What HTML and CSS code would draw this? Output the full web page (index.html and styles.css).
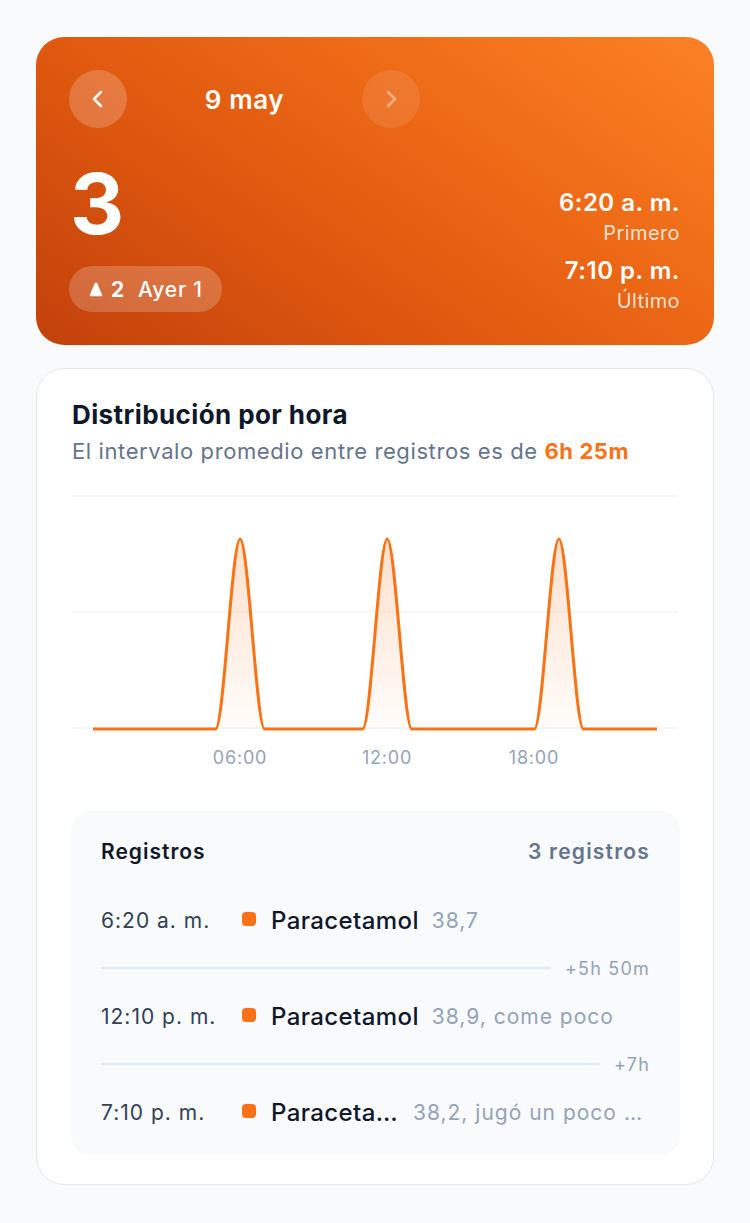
FILE: index.html
```html
<!DOCTYPE html>
<html lang="es">
<head>
    <meta charset="UTF-8">
    <meta name="viewport" content="width=device-width, initial-scale=1.0">
    <title>Distribución por hora</title>
    <link rel="stylesheet" href="styles.css">
</head>
<body>
    <div class="page">
        <!-- Day summary -->
        <section class="hero">
            <div class="day-nav">
                <button class="nav-btn">
                    <svg width="16" height="20" viewBox="0 0 16 20"><path d="M11 3 L4 10 L11 17" fill="none" stroke="#fff" stroke-width="2.6" stroke-linecap="round" stroke-linejoin="round"/></svg>
                </button>
                <div class="day-label">9 may</div>
                <button class="nav-btn disabled">
                    <svg width="16" height="20" viewBox="0 0 16 20"><path d="M5 3 L12 10 L5 17" fill="none" stroke="#fff" stroke-width="2.6" stroke-linecap="round" stroke-linejoin="round"/></svg>
                </button>
            </div>
            <div class="hero-body">
                <div class="hero-left">
                    <div class="count">3</div>
                    <div class="compare">
                        <svg width="14" height="15" viewBox="0 0 14 15"><path d="M5.6 1.6 Q7 -0.4 8.4 1.6 L13.2 13 Q13.6 14.2 12.3 14.2 L1.7 14.2 Q0.4 14.2 0.8 13 Z" fill="#fff"/></svg>
                        <span class="compare-diff">2</span>
                        <span class="compare-prev">Ayer 1</span>
                    </div>
                </div>
                <div class="hero-right">
                    <div class="stat">
                        <div class="stat-time">6:20 a. m.</div>
                        <div class="stat-label">Primero</div>
                    </div>
                    <div class="stat">
                        <div class="stat-time">7:10 p. m.</div>
                        <div class="stat-label">Último</div>
                    </div>
                </div>
            </div>
        </section>

        <!-- Hourly distribution -->
        <section class="card">
            <h2 class="card-title">Distribución por hora</h2>
            <p class="card-sub">El intervalo promedio entre registros es de <strong>6h 25m</strong></p>

            <svg class="chart" width="606" height="280" viewBox="0 0 606 280">
                <defs>
                    <linearGradient id="area" x1="0" y1="0" x2="0" y2="1">
                        <stop offset="0" stop-color="#f97316" stop-opacity="0.22"/>
                        <stop offset="1" stop-color="#f97316" stop-opacity="0.02"/>
                    </linearGradient>
                </defs>
                <line x1="0" y1="4" x2="606" y2="4" class="grid"/>
                <line x1="0" y1="120" x2="606" y2="120" class="grid"/>
                <line x1="0" y1="236" x2="606" y2="236" class="grid"/>
                <path fill="url(#area)" d="M143.6 237 C151.8 237 159.9 47 168.1 47 C176.3 47 184.4 237 192.6 237 Z
                    M290.7 237 C298.9 237 307 47 315.2 47 C323.4 47 331.6 237 339.8 237 Z
                    M462.4 237 C470.6 237 478.7 47 486.9 47 C495.1 47 503.2 237 511.4 237 Z"/>
                <path fill="none" stroke="#f97316" stroke-width="3" stroke-linejoin="round"
                    d="M21 237 L143.6 237 C151.8 237 159.9 47 168.1 47 C176.3 47 184.4 237 192.6 237
                    L290.7 237 C298.9 237 307 47 315.2 47 C323.4 47 331.6 237 339.8 237
                    L462.4 237 C470.6 237 478.7 47 486.9 47 C495.1 47 503.2 237 511.4 237 L585 237"/>
                <text x="168" y="272" class="axis">06:00</text>
                <text x="315" y="272" class="axis">12:00</text>
                <text x="462" y="272" class="axis">18:00</text>
            </svg>

            <div class="log">
                <div class="log-head">
                    <span class="log-title">Registros</span>
                    <span class="log-count">3 registros</span>
                </div>
                <div class="entry">
                    <span class="entry-time">6:20 a. m.</span>
                    <span class="entry-dot"></span>
                    <span class="entry-name">Paracetamol</span>
                    <span class="entry-note">38,7</span>
                </div>
                <div class="gap-row">
                    <span class="gap-line"></span>
                    <span class="gap-label">+5h 50m</span>
                </div>
                <div class="entry">
                    <span class="entry-time">12:10 p. m.</span>
                    <span class="entry-dot"></span>
                    <span class="entry-name">Paracetamol</span>
                    <span class="entry-note">38,9, come poco</span>
                </div>
                <div class="gap-row">
                    <span class="gap-line"></span>
                    <span class="gap-label">+7h</span>
                </div>
                <div class="entry">
                    <span class="entry-time">7:10 p. m.</span>
                    <span class="entry-dot"></span>
                    <span class="entry-name">Paracetamol</span>
                    <span class="entry-note">38,2, jugó un poco más tarde y luego cenó bien antes de dormir</span>
                </div>
            </div>
        </section>
    </div>
</body>
</html>
```

FILE: styles.css
```css
body {
    margin: 0;
    background: #f9fafb;
    font-family: Inter, "Noto Sans", sans-serif;
    color: #0f172a;
}

.page {
    display: flex;
    flex-direction: column;
    gap: 23px;
    padding: 37px 36px;
}

/* Day summary */
.hero {
    padding: 33px 34px 33px 33px;
    border-radius: 28px;
    background: linear-gradient(35deg, #c2410c 0%, #e0590f 40%, #f2701a 75%, #fb8125 100%);
    color: #fff;
}

.day-nav {
    display: flex;
    align-items: center;
    width: 351px;
    margin-bottom: 32px;
}

.nav-btn {
    display: flex;
    align-items: center;
    justify-content: center;
    width: 58px;
    height: 58px;
    padding: 0;
    border: none;
    border-radius: 50%;
    background: rgba(255, 255, 255, 0.2);
}

.nav-btn.disabled {
    background: rgba(255, 255, 255, 0.1);
}

.nav-btn.disabled svg {
    opacity: 0.4;
}

.day-label {
    flex: 1;
    text-align: center;
    font-size: 26px;
    font-weight: 600;
    letter-spacing: 0.6px;
}

.hero-body {
    display: flex;
    justify-content: space-between;
    align-items: flex-end;
}

.count {
    font-size: 84px;
    font-weight: 700;
    line-height: 88px;
    padding-left: 1px;
}

.compare {
    display: inline-flex;
    align-items: center;
    height: 46px;
    margin-top: 18px;
    padding: 0 19px 0 20px;
    border-radius: 23px;
    background: rgba(255, 255, 255, 0.2);
    font-size: 21px;
    letter-spacing: 0.8px;
}

.compare svg {
    margin-right: 8px;
}

.compare-diff {
    font-weight: 700;
    margin-right: 13px;
}

.compare-prev {
    font-weight: 500;
}

.hero-right {
    display: flex;
    flex-direction: column;
    gap: 13px;
    text-align: right;
}

.stat-time {
    font-size: 24px;
    font-weight: 600;
    line-height: 28px;
    letter-spacing: 0.5px;
}

.stat-label {
    margin-top: 5px;
    font-size: 20px;
    line-height: 22px;
    letter-spacing: 0.4px;
    color: rgba(255, 255, 255, 0.82);
}

/* Hourly distribution */
.card {
    padding: 30px 35px 29px;
    border: 1px solid #e5e7eb;
    border-radius: 28px;
    background: #fff;
}

.card-title {
    margin: 0;
    font-size: 26px;
    font-weight: 700;
    line-height: 32px;
    letter-spacing: 0.4px;
    color: #0f172a;
}

.card-sub {
    margin: 6px 0 0;
    font-size: 22px;
    line-height: 28px;
    letter-spacing: 0.6px;
    color: #64748b;
}

.card-sub strong {
    color: #f97316;
    font-weight: 700;
}

.chart {
    display: block;
    margin-top: 27px;
}

.grid {
    stroke: #f1f3f6;
    stroke-width: 1.5;
}

.axis {
    font-family: Inter, sans-serif;
    font-size: 18px;
    letter-spacing: 0.8px;
    fill: #94a3b8;
    text-anchor: middle;
}

.log {
    margin: 39px -2px 0 -1px;
    padding: 27px 30px 19px 30px;
    border-radius: 20px;
    background: #f8fafc;
}

.log-head {
    display: flex;
    justify-content: space-between;
    margin-bottom: 30px;
    font-size: 21px;
    font-weight: 600;
    line-height: 28px;
    letter-spacing: 1px;
}

.log-count {
    color: #64748b;
    letter-spacing: 1.2px;
}

.entry {
    display: flex;
    align-items: center;
    height: 48px;
}

.entry-time {
    flex: 0 0 141px;
    font-size: 21px;
    letter-spacing: 1px;
    color: #334155;
}

.entry-dot {
    flex: 0 0 14px;
    height: 14px;
    margin: -2px 15px 0 0;
    border-radius: 4px;
    background: #f97316;
}

.entry-name,
.entry-note {
    white-space: nowrap;
    overflow: hidden;
    text-overflow: ellipsis;
}

.entry-name {
    flex: 0 1 auto;
    min-width: 129px;
    margin-right: 13px;
    font-size: 24px;
    font-weight: 500;
    letter-spacing: 0.4px;
    color: #0f172a;
}

.entry-note {
    flex: 0 1 auto;
    min-width: 0;
    font-size: 21px;
    letter-spacing: 1px;
    color: #94a3b8;
}

.gap-row {
    display: flex;
    align-items: center;
    gap: 14px;
    height: 48px;
}

.gap-line {
    flex: 1;
    height: 2px;
    background: #e2e8f0;
}

.gap-label {
    font-size: 18px;
    letter-spacing: 1.2px;
    color: #94a3b8;
}
```
